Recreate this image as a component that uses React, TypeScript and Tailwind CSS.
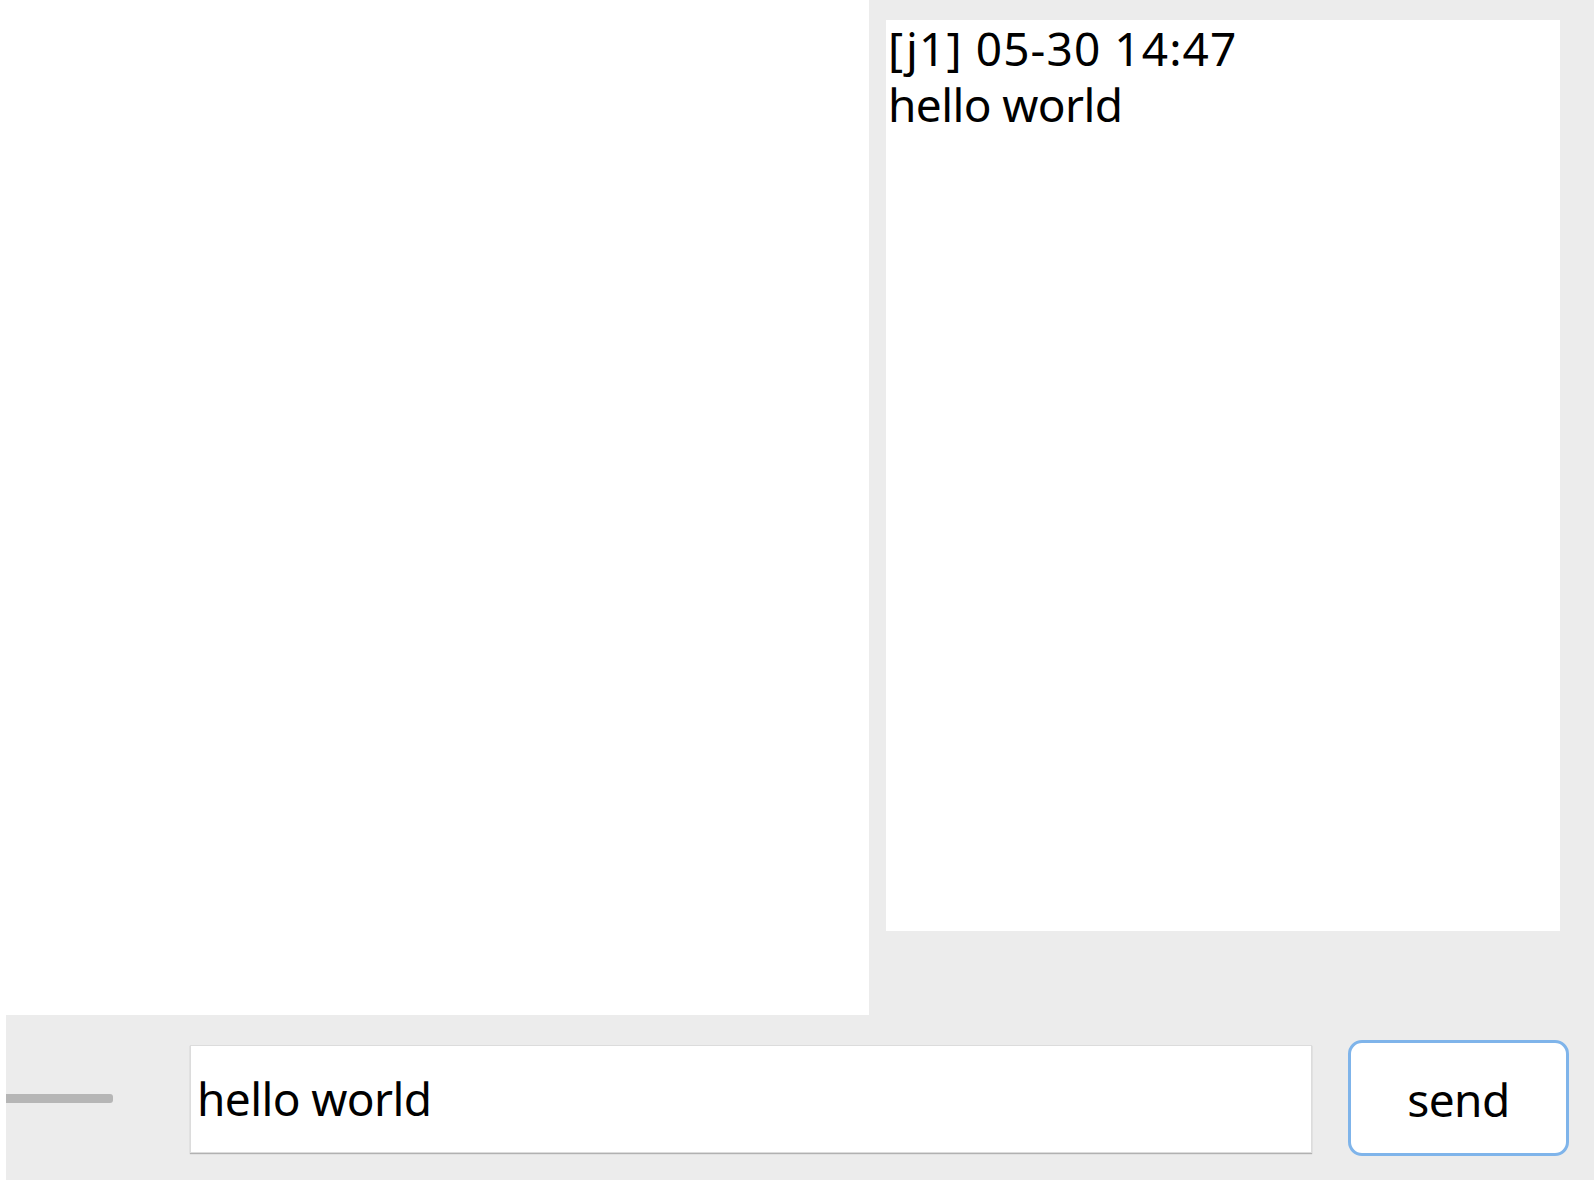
import React from "react";

export default function App() {
  const font = { fontFamily: '"Noto Sans", "Open Sans", sans-serif' };
  return (
    <div
      className="w-[1594px] h-[1180px] bg-white flex flex-col overflow-hidden text-black"
      style={font}
    >
      <div className="flex h-[1015px]">
        <div className="w-[869px] h-full bg-white" />
        <div className="flex-1 bg-[#ececec] pt-[20px] pl-[17px]">
          <div className="w-[674px] h-[911px] bg-white pl-[2px] pt-0 text-[46px] leading-[56px]">
            <p className="tracking-[1.1px]">
              [j1] 05-30 14:47
              <br />
              <span className="tracking-[-0.6px]">hello world</span>
            </p>
          </div>
        </div>
      </div>
      <div className="flex-1 ml-[6px] bg-[#ececec] flex items-center">
        <div className="w-[107px] h-[9px] bg-[#b6b6b6] rounded-r-[3px] mt-[2px]" />
        <div className="ml-[77px] w-[1122px] h-[108px] bg-white border border-[#dcdcdc] shadow-[0_1px_1px_rgba(0,0,0,0.25)] flex items-center pl-[6px] text-[46px] tracking-[-0.6px] mt-[2px]">
          hello world
        </div>
        <button className="ml-[36px] w-[221px] h-[116px] bg-white border-[3px] border-[#7fb4ea] rounded-[14px] text-[46px] tracking-[-0.6px] flex items-center justify-center pt-[3px]">
          send
        </button>
      </div>
    </div>
  );
}
